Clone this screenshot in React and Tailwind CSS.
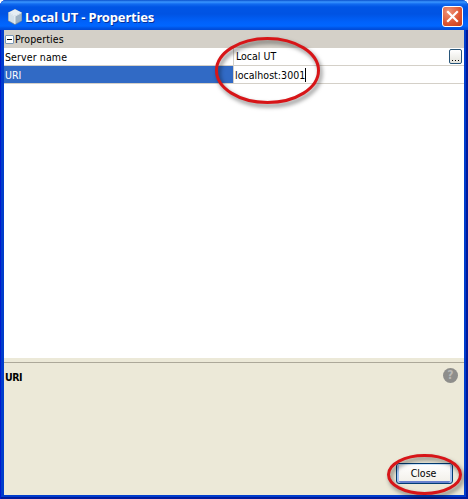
function WindowIcon() {
  return (
    <svg width="16" height="18" viewBox="0 0 16 18" className="shrink-0">
      <path d="M8 1 15 4.5V13L8 17 1 13V4.5Z" fill="#6b87a5" />
      <path d="M8 1.3 14.5 4.5 8 8 1.5 4.5Z" fill="#e6eef4" />
      <path d="M1.5 5 8 8.3V16L1.5 12.5Z" fill="#d3e0ea" />
      <path d="M14.5 5 8 8.3V16L14.5 12.5Z" fill="#9fb3c4" />
      <path d="M8 8.2V16M1.5 4.8 8 8.2 14.5 4.8" fill="none" stroke="#f8fbfd" strokeWidth="0.8" />
    </svg>
  );
}

function TitleBar() {
  return (
    <header className="flex h-[30px] shrink-0 items-center rounded-t-[6px] bg-[linear-gradient(to_bottom,#0a50cc_0px,#3a96ff_2px,#126bf0_4px,#0055e5_7px,#0053e3_14px,#0062fb_22px,#0066ff_26px,#0054e4_28px,#0049d6_30px)] pl-[7px] pr-[5px] pt-[3px]">
      <WindowIcon />
      <h1 className="ml-[2px] mt-[1px] whitespace-nowrap font-['Noto_Sans',sans-serif] text-[13px] font-bold leading-4 tracking-[-0.17px] text-white [text-shadow:1px_1px_0_#06319a]">
        Local UT - Properties
      </h1>
      <button className="ml-auto flex h-[21px] w-[21px] items-center justify-center rounded-[3px] border border-white bg-[radial-gradient(circle_at_30%_25%,#ef9479,#de5430_60%,#c43d18)]">
        <svg width="13" height="13" viewBox="0 0 13 13">
          <path d="M2 2 11 11M11 2 2 11" stroke="white" strokeWidth="2.2" strokeLinecap="square" />
        </svg>
      </button>
    </header>
  );
}

function Callout({ width, height, className }) {
  return (
    <svg width={width} height={height} className={`pointer-events-none absolute overflow-visible drop-shadow-[2px_3px_2px_rgba(0,0,0,0.5)] ${className}`}>
      <ellipse cx={width / 2} cy={height / 2} rx={width / 2 - 1.5} ry={height / 2 - 1.5} fill="none" stroke="#d71518" strokeWidth="3" />
    </svg>
  );
}

export default function App() {
  return (
    <div className="h-[499px] w-[468px] overflow-hidden bg-white font-['DejaVu_Sans_Condensed','Liberation_Sans',sans-serif] text-[10.5px] leading-[13px] text-black">
      <div className="relative flex h-[499px] w-[468px] flex-col rounded-t-[6px] bg-[#003dcc] shadow-[inset_1px_0_0_#0019cf,inset_-2px_-2px_0_#001a9c]">
        <TitleBar />
        <main className="ml-1 mr-1 flex h-[465px] flex-col bg-white">
          <div className="flex h-[18px] items-center bg-[#d4d0c8] pl-px">
            <span className="flex h-[9px] w-[9px] items-center justify-center rounded-[1px] border border-[#7b98b5] bg-white">
              <span className="h-px w-[5px] bg-black" />
            </span>
            <span className="ml-px tracking-[0.1px]">Properties</span>
          </div>
          <div className="grid h-[18px] grid-cols-[229px_1fr] border-b border-[#d4d0c8]">
            <div className="pl-px pt-[3px] tracking-[0.12px]">Server name</div>
            <div className="flex justify-between border-l border-[#d4d0c8] pl-[2px] pr-[2px]">
              <span className="pt-[2px]">Local UT</span>
              <button className="mt-[1px] flex h-[15px] w-[13px] items-end justify-center rounded-[2px] border border-[#285579] bg-[linear-gradient(#fff,#e4e3dc)] pb-[2px]">
                <span className="flex gap-[2px]">
                  <i className="h-px w-px bg-black" /><i className="h-px w-px bg-black" /><i className="h-px w-px bg-black" />
                </span>
              </button>
            </div>
          </div>
          <div className="grid h-[18px] grid-cols-[229px_1fr] border-b border-[#d4d0c8]">
            <div className="bg-[#316ac5] pl-px pt-[3px] text-white">URI</div>
            <div className="flex border-l border-[#d4d0c8] pl-px pt-[2px]">
              <span className="pt-px tracking-[0.05px]">localhost:3001</span>
              <span className="h-[14px] w-px bg-black" />
            </div>
          </div>
          <div className="h-[274px]" />
          <section className="flex flex-1 flex-col bg-[#ece9d8]">
            <div className="h-[5px] shrink-0 border-b border-[#aca899]" />
            <div className="flex justify-between pl-px pr-[6px] pt-[5px]">
              <h2 className="pt-[3px] text-[10.5px] font-bold tracking-[-0.5px]">URI</h2>
              <span className="flex h-[15px] w-[15px] items-center justify-center rounded-full bg-[#8e8e8b] text-[12px] font-bold text-[#b9b9b6]">?</span>
            </div>
            <footer className="mt-auto flex justify-end pb-[11px] pr-[11px]">
              <button className="h-[21px] w-[57px] rounded-[3px] border border-[#003c74] bg-[linear-gradient(#fff,#f1efe8)] pb-[1px] pr-[2px] shadow-[inset_0_1px_0_#cee7ff,inset_2px_0_0_#a9c4ef,inset_-2px_0_0_#a9c4ef,inset_0_-2px_0_#6982ce]">Close</button>
            </footer>
          </section>
        </main>
        <Callout width={105} height={67} className="left-[215px] top-[37px]" />
        <Callout width={75} height={41} className="left-[387px] top-[454px]" />
      </div>
    </div>
  );
}
